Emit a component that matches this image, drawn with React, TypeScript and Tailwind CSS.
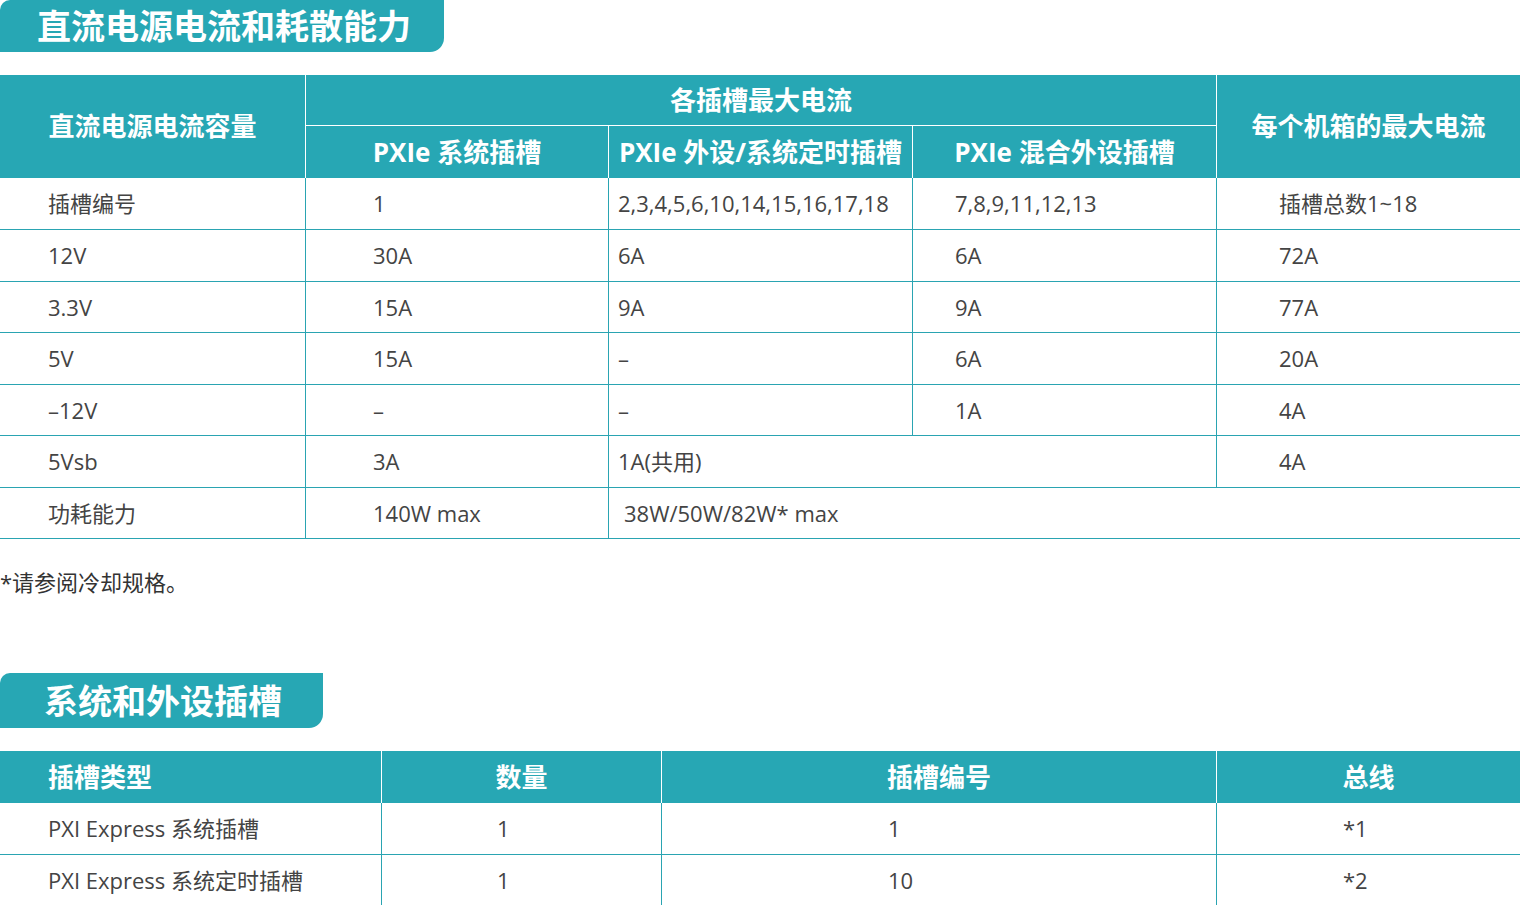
import React from "react";

const FONT = { fontFamily: '"Open Sans", "Noto Sans CJK SC", sans-serif' };

const H = "bg-[#27a7b4] text-white font-bold text-[26px] text-center align-middle p-0";
const D = "text-[#444] text-[22px] align-middle p-0 text-left";
const BR = "border-r border-r-[#2aa4b2]";
const BB = "border-b border-b-[#2aa4b2]";

export default function App() {
  return (
    <div className="w-[1523px] h-[905px] overflow-hidden bg-white" style={FONT}>
      <div className="w-[444px] h-[52px] pl-[37px] bg-[#27a7b4] rounded-tl-[10px] rounded-br-[14px] flex items-center text-white font-bold text-[34px] leading-none">
        直流电源电流和耗散能力
      </div>

      <table className="mt-[23px] w-[1520px] table-fixed border-separate border-spacing-0">
        <colgroup>
          <col className="w-[306px]" />
          <col className="w-[303px]" />
          <col className="w-[304px]" />
          <col className="w-[304px]" />
          <col className="w-[303px]" />
        </colgroup>
        <thead>
          <tr>
            <th rowSpan={2} className={`${H} border-r border-r-white`}>
              直流电源电流容量
            </th>
            <th colSpan={3} className={`${H} h-[51px] border-r border-r-white border-b border-b-white`}>
              各插槽最大电流
            </th>
            <th rowSpan={2} className={H}>
              每个机箱的最大电流
            </th>
          </tr>
          <tr>
            <th className={`${H} h-[52px] border-r border-r-white`}>PXIe 系统插槽</th>
            <th className={`${H} h-[52px] border-r border-r-white`}>PXIe 外设/系统定时插槽</th>
            <th className={`${H} h-[52px] border-r border-r-white`}>PXIe 混合外设插槽</th>
          </tr>
        </thead>
        <tbody>
          {[
            ["插槽编号", "1", "2,3,4,5,6,10,14,15,16,17,18", "7,8,9,11,12,13", "插槽总数1~18", 52],
            ["12V", "30A", "6A", "6A", "72A", 52],
            ["3.3V", "15A", "9A", "9A", "77A", 51],
            ["5V", "15A", "–", "6A", "20A", 52],
            ["–12V", "–", "–", "1A", "4A", 51],
          ].map((r) => (
            <tr key={r[0] as string}>
              <td className={`${D} ${BR} ${BB} pl-[48px]`} style={{ height: r[5] as number }}>
                {r[0]}
              </td>
              <td className={`${D} ${BR} ${BB} pl-[67px]`}>{r[1]}</td>
              <td className={`${D} ${BR} ${BB} pl-[9px]`}>{r[2]}</td>
              <td className={`${D} ${BR} ${BB} pl-[42px]`}>{r[3]}</td>
              <td className={`${D} ${BB} pl-[62px]`}>{r[4]}</td>
            </tr>
          ))}
          <tr>
            <td className={`${D} ${BR} ${BB} pl-[48px] h-[52px]`}>5Vsb</td>
            <td className={`${D} ${BR} ${BB} pl-[67px]`}>3A</td>
            <td colSpan={2} className={`${D} ${BR} ${BB} pl-[9px]`}>
              1A(共用)
            </td>
            <td className={`${D} ${BB} pl-[62px]`}>4A</td>
          </tr>
          <tr>
            <td className={`${D} ${BR} ${BB} pl-[48px] h-[51px]`}>功耗能力</td>
            <td className={`${D} ${BR} ${BB} pl-[67px]`}>140W max</td>
            <td colSpan={3} className={`${D} ${BB} pl-[15px]`}>
              38W/50W/82W* max
            </td>
          </tr>
        </tbody>
      </table>

      <p className="mt-[28px] h-[30px] leading-[30px] text-[22px] text-[#333]">*请参阅冷却规格。</p>

      <div className="mt-[76px] w-[323px] h-[55px] pl-[44px] bg-[#27a7b4] rounded-tl-[10px] rounded-br-[14px] flex items-center text-white font-bold text-[34px] leading-none">
        系统和外设插槽
      </div>

      <table className="mt-[23px] w-[1520px] table-fixed border-separate border-spacing-0">
        <colgroup>
          <col className="w-[382px]" />
          <col className="w-[280px]" />
          <col className="w-[555px]" />
          <col className="w-[303px]" />
        </colgroup>
        <thead>
          <tr>
            <th className={`${H} h-[52px] border-r border-r-white !text-left pl-[48px]`}>插槽类型</th>
            <th className={`${H} border-r border-r-white`}>数量</th>
            <th className={`${H} border-r border-r-white`}>插槽编号</th>
            <th className={H}>总线</th>
          </tr>
        </thead>
        <tbody>
          {[
            ["PXI Express 系统插槽", "1", "1", "*1"],
            ["PXI Express 系统定时插槽", "1", "10", "*2"],
          ].map((r) => (
            <tr key={r[0]}>
              <td className={`${D} ${BR} ${BB} pl-[48px] h-[52px]`}>{r[0]}</td>
              <td className={`${D} ${BR} ${BB} pl-[115px]`}>{r[1]}</td>
              <td className={`${D} ${BR} ${BB} pl-[226px]`}>{r[2]}</td>
              <td className={`${D} ${BB} pl-[126px]`}>{r[3]}</td>
            </tr>
          ))}
        </tbody>
      </table>
    </div>
  );
}
